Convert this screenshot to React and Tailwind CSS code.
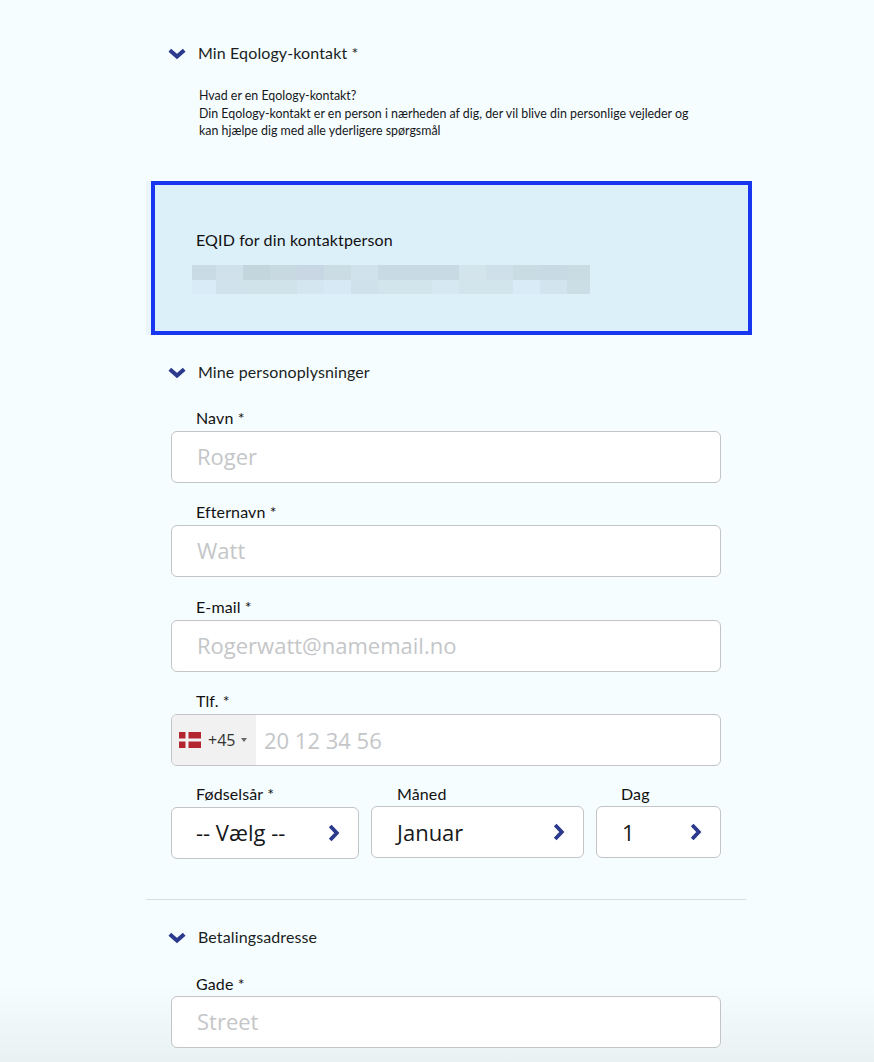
import React from "react";

function Down() {
  return (
    <svg width="18" height="12" viewBox="0 0 18 12" className="shrink-0 -ml-[1px] mr-[1px] translate-y-[1px]">
      <path d="M1.8 2.2 L9 8.6 L16.2 2.2" fill="none" stroke="#2b3a8c" strokeWidth="4" strokeLinecap="butt" />
    </svg>
  );
}

function Right() {
  return (
    <svg width="12" height="18" viewBox="0 0 12 18" className="shrink-0">
      <path d="M2.2 2 L8.8 9 L2.2 16" fill="none" stroke="#2b3a8c" strokeWidth="3.8" />
    </svg>
  );
}

function Heading({ children, className }) {
  return (
    <div className={`flex items-center gap-[11px] pl-[23px] ${className}`}>
      <Down />
      <span className="font-['Lato',sans-serif] text-[16px] leading-[20px] tracking-[0.12px] text-[#1b1f23]">{children}</span>
    </div>
  );
}

function Label({ children, className }) {
  return <div className={`font-['Lato',sans-serif] text-[16px] leading-[20px] tracking-[0.12px] text-[#111] ${className}`}>{children}</div>;
}

function Input({ placeholder }) {
  return (
    <div className="ml-[25px] flex h-[52px] w-[550px] items-center rounded-[6px] border border-[#c2c4c6] bg-white pb-[1px] pl-[25px] font-['Open_Sans',sans-serif] text-[22px] text-[#c4c6c8]">
      {placeholder}
    </div>
  );
}

function Field({ label, placeholder, className }) {
  return (
    <div className={className}>
      <Label className="ml-[50px] mb-[3px]">{label}</Label>
      <Input placeholder={placeholder} />
    </div>
  );
}

function Select({ value, className, chevron }) {
  return (
    <div className={`relative flex h-[52px] items-center rounded-[6px] border border-[#c2c4c6] bg-white font-['Open_Sans',sans-serif] text-[22px] text-[#16181a] ${className}`}>
      {value}
      <span className={`absolute top-[16px] ${chevron}`}><Right /></span>
    </div>
  );
}

const topRow = ["bg-[#c9dbe5]", "bg-[#d0e1eb]", "bg-[#c3d6de]", "bg-[#c8d9e2]", "bg-[#c8d7e3]", "bg-[#cbdce5]", "bg-[#d0e2ec]", "bg-[#c8dae3]", "bg-[#c8dae3]", "bg-[#c8dae4]", "bg-[#d3e4ec]", "bg-[#cfe0ea]", "bg-[#c9dbe3]", "bg-[#c8dae3]", "bg-[#c9dbe3]"];
const bottomRow = ["bg-[#d9ebf6]", "bg-[#d0e2ec]", "bg-[#d1e3ea]", "bg-[#d1e3ea]", "bg-[#d4e6f0]", "bg-[#d7e9f4]", "bg-[#cfe1ea]", "bg-[#d2e4ec]", "bg-[#d2e4ec]", "bg-[#d6e8f1]", "bg-[#d2e4ec]", "bg-[#d2e4ec]", "bg-[#d9ebf6]", "bg-[#d2e4ee]", "bg-[#cbdde5]"];
const cols = "grid h-[14.5px] grid-cols-[24px_27px_27px_27px_27px_27px_27px_27px_27px_27px_27px_27px_27px_27px_23px]";

export default function App() {
  return (
    <div className="h-[1062px] w-full overflow-hidden bg-[linear-gradient(to_bottom,#f5fdff_0px,#f5fdff_985px,#e9f1f3_1062px)]">
      <div className="ml-[146px] w-[606px]">
        <Heading className="pt-[43px]">Min Eqology-kontakt *</Heading>
        <div className="ml-[53px] mt-[24px] w-[495px] font-['Lato',sans-serif] text-[12.4px] leading-[17px] text-[#15181b]">
          <div className="mb-[1px]">Hvad er en Eqology-kontakt?</div>
          <div>Din Eqology-kontakt er en person i nærheden af dig, der vil blive din personlige vejleder og kan hjælpe dig med alle yderligere spørgsmål</div>
        </div>

        <div className="ml-[5px] mt-[42px] h-[154px] w-[601px] border-4 border-[#1636ef] bg-[#dcf0fa] pl-[37px] pt-[45px] shadow-[-5px_0_0_#eaf6fc]">
          <Label className="ml-[4px]">EQID for din kontaktperson</Label>
          <div className="mt-[15px]">
            <div className={cols}>{topRow.map((c, i) => <div key={i} className={c} />)}</div>
            <div className={cols}>{bottomRow.map((c, i) => <div key={i} className={c} />)}</div>
          </div>
        </div>

        <Heading className="mt-[27px]">Mine personoplysninger</Heading>
        <Field className="mt-[26px]" label="Navn *" placeholder="Roger" />
        <Field className="mt-[19px]" label="Efternavn *" placeholder="Watt" />
        <Field className="mt-[20px]" label="E-mail *" placeholder="Rogerwatt@namemail.no" />

        <div className="mt-[19px]">
          <Label className="ml-[50px] mb-[3px]">Tlf. *</Label>
          <div className="ml-[25px] flex h-[52px] w-[550px] items-stretch overflow-hidden rounded-[6px] border border-[#c2c4c6] bg-white font-['Open_Sans',sans-serif]">
            <div className="flex w-[84px] items-center bg-[#f1f1f1] pl-[7px]">
              <svg width="22" height="16" viewBox="0 0 22 16" className="shrink-0">
                <rect width="22" height="16" fill="#b3252f" />
                <rect x="6.5" width="3" height="16" fill="#f3f3f3" />
                <rect y="6.5" width="22" height="3" fill="#f3f3f3" />
              </svg>
              <span className="ml-[7px] text-[16px] text-[#333]">+45</span>
              <span className="ml-[6px] h-0 w-0 border-x-[3px] border-t-[4px] border-x-transparent border-t-[#666]" />
            </div>
            <div className="flex items-center pl-[8px] text-[22px] text-[#c4c6c8]">20 12 34 56</div>
          </div>
        </div>

        <div className="ml-[25px] mt-[18px] flex w-[550px] items-end gap-[12px]">
          <div className="w-[188px]">
            <Label className="ml-[25px] mb-[2px]">Fødselsår *</Label>
            <Select value="-- Vælg --" className="w-[188px] pl-[24px] pb-[2px] translate-y-[1px] text-[21.5px]" chevron="right-[18px]" />
          </div>
          <div className="w-[213px]">
            <Label className="ml-[26px] mb-[2px]">Måned</Label>
            <Select value="Januar" className="w-[213px] pl-[25px]" chevron="right-[18px]" />
          </div>
          <div className="w-[125px]">
            <Label className="ml-[25px] mb-[2px]">Dag</Label>
            <Select value="1" className="w-[125px] pl-[25px]" chevron="right-[18px]" />
          </div>
        </div>

        <div className="mt-[41px] h-px w-[600px] bg-[#d8dfe2]" />

        <Heading className="mt-[27px]">Betalingsadresse</Heading>
        <div className="mt-[27px]">
          <Label className="ml-[50px] mb-[2px]">Gade *</Label>
          <Input placeholder="Street" />
        </div>
      </div>
    </div>
  );
}
